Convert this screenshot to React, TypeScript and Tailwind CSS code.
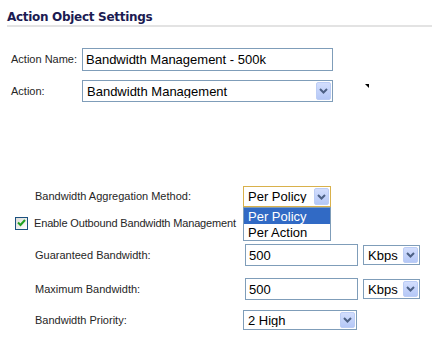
import React from "react";

function Chevron() {
  return (
    <svg width="9" height="6" viewBox="0 0 9 6">
      <path d="M1 1 L4.5 4.5 L8 1" fill="none" stroke="#4d6185" strokeWidth="2" />
    </svg>
  );
}

function Select({ value, width, height, focused }: { value: string; width: string; height: string; focused?: boolean }) {
  return (
    <div
      className={`flex items-center bg-white border ${focused ? "border-[#d9b14b]" : "border-[#7f9db9]"} ${width} ${height}`}
    >
      <span className="flex-1 pl-[4px] text-[13px] text-black leading-none whitespace-nowrap overflow-hidden">{value}</span>
      <div className="w-[15px] self-stretch m-[1px] flex items-center justify-center bg-gradient-to-b from-[#d3defd] to-[#b5c8f7] border border-[#bccdf5] rounded-[2px]">
        <Chevron />
      </div>
    </div>
  );
}

function TextInput({ value, width, height }: { value: string; width: string; height: string }) {
  return (
    <div className={`flex items-center bg-white border border-[#7f9db9] pl-[3px] text-[13px] text-black leading-none ${width} ${height}`}>
      {value}
    </div>
  );
}

export default function App() {
  return (
    <div className="w-[432px] h-[338px] bg-white relative overflow-hidden font-['Liberation_Sans',sans-serif] text-[11px] text-[#262626]">
      {/* Section header */}
      <div className="pt-[10px] pl-[7px]">
        <h1 className="font-['DejaVu_Sans',sans-serif] font-bold text-[12px] tracking-[-0.3px] leading-[14px] text-[#1b1b52] pb-[1px] border-b-2 border-[#e3e3e3]">
          Action Object Settings
        </h1>
      </div>

      {/* Action name */}
      <div className="flex items-center h-[23px] mt-[21px]">
        <span className="w-[82px] pl-[11px]">Action Name:</span>
        <TextInput value="Bandwidth Management - 500k" width="w-[251px]" height="h-[23px]" />
      </div>

      {/* Action */}
      <div className="flex items-center h-[22px] mt-[9px]">
        <span className="w-[82px] pl-[11px]">Action:</span>
        <Select value="Bandwidth Management" width="w-[251px]" height="h-[22px]" />
        <svg className="ml-[32px] mt-[-10px]" width="4" height="4" viewBox="0 0 4 4">
          <path d="M0 0 L4 0 L4 4 Z" fill="#000" />
        </svg>
      </div>

      {/* Aggregation method */}
      <div className="flex items-center h-[21px] mt-[84px]">
        <span className="w-[243px] pl-[35px]">Bandwidth Aggregation Method:</span>
        <div className="relative">
          <Select value="Per Policy" width="w-[88px]" height="h-[21px]" focused />
          <div className="absolute left-0 top-full w-[88px] bg-white border border-[#7f9db9] z-10 text-[13px] leading-none">
            <div className="h-[16px] flex items-center pl-[4px] bg-[#316ac5] text-white">Per Policy</div>
            <div className="h-[16px] flex items-center pl-[4px] text-black">Per Action</div>
          </div>
        </div>
      </div>

      {/* Enable outbound */}
      <div className="flex items-center h-[18px] mt-[7px]">
        <div className="ml-[15px] w-[13px] h-[13px] border border-[#1c5180] bg-gradient-to-br from-[#dcdcd7] to-white flex items-center justify-center">
          <svg width="9" height="8" viewBox="0 0 9 8">
            <path d="M1 3.5 L3.5 6 L8 1" fill="none" stroke="#21a121" strokeWidth="2" />
          </svg>
        </div>
        <span className="ml-[6px] tracking-[-0.15px]">Enable Outbound Bandwidth Management</span>
      </div>

      {/* Guaranteed */}
      <div className="flex items-center h-[22px] mt-[12px]">
        <span className="w-[245px] pl-[35px]">Guaranteed Bandwidth:</span>
        <TextInput value="500" width="w-[113px]" height="h-[22px]" />
        <div className="ml-[5px]">
          <Select value="Kbps" width="w-[57px]" height="h-[20px]" />
        </div>
      </div>

      {/* Maximum */}
      <div className="flex items-center h-[22px] mt-[12px]">
        <span className="w-[245px] pl-[35px]">Maximum Bandwidth:</span>
        <TextInput value="500" width="w-[113px]" height="h-[22px]" />
        <div className="ml-[5px]">
          <Select value="Kbps" width="w-[57px]" height="h-[20px]" />
        </div>
      </div>

      {/* Priority */}
      <div className="flex items-center h-[20px] mt-[10px]">
        <span className="w-[243px] pl-[35px]">Bandwidth Priority:</span>
        <Select value="2 High" width="w-[114px]" height="h-[20px]" />
      </div>
    </div>
  );
}
